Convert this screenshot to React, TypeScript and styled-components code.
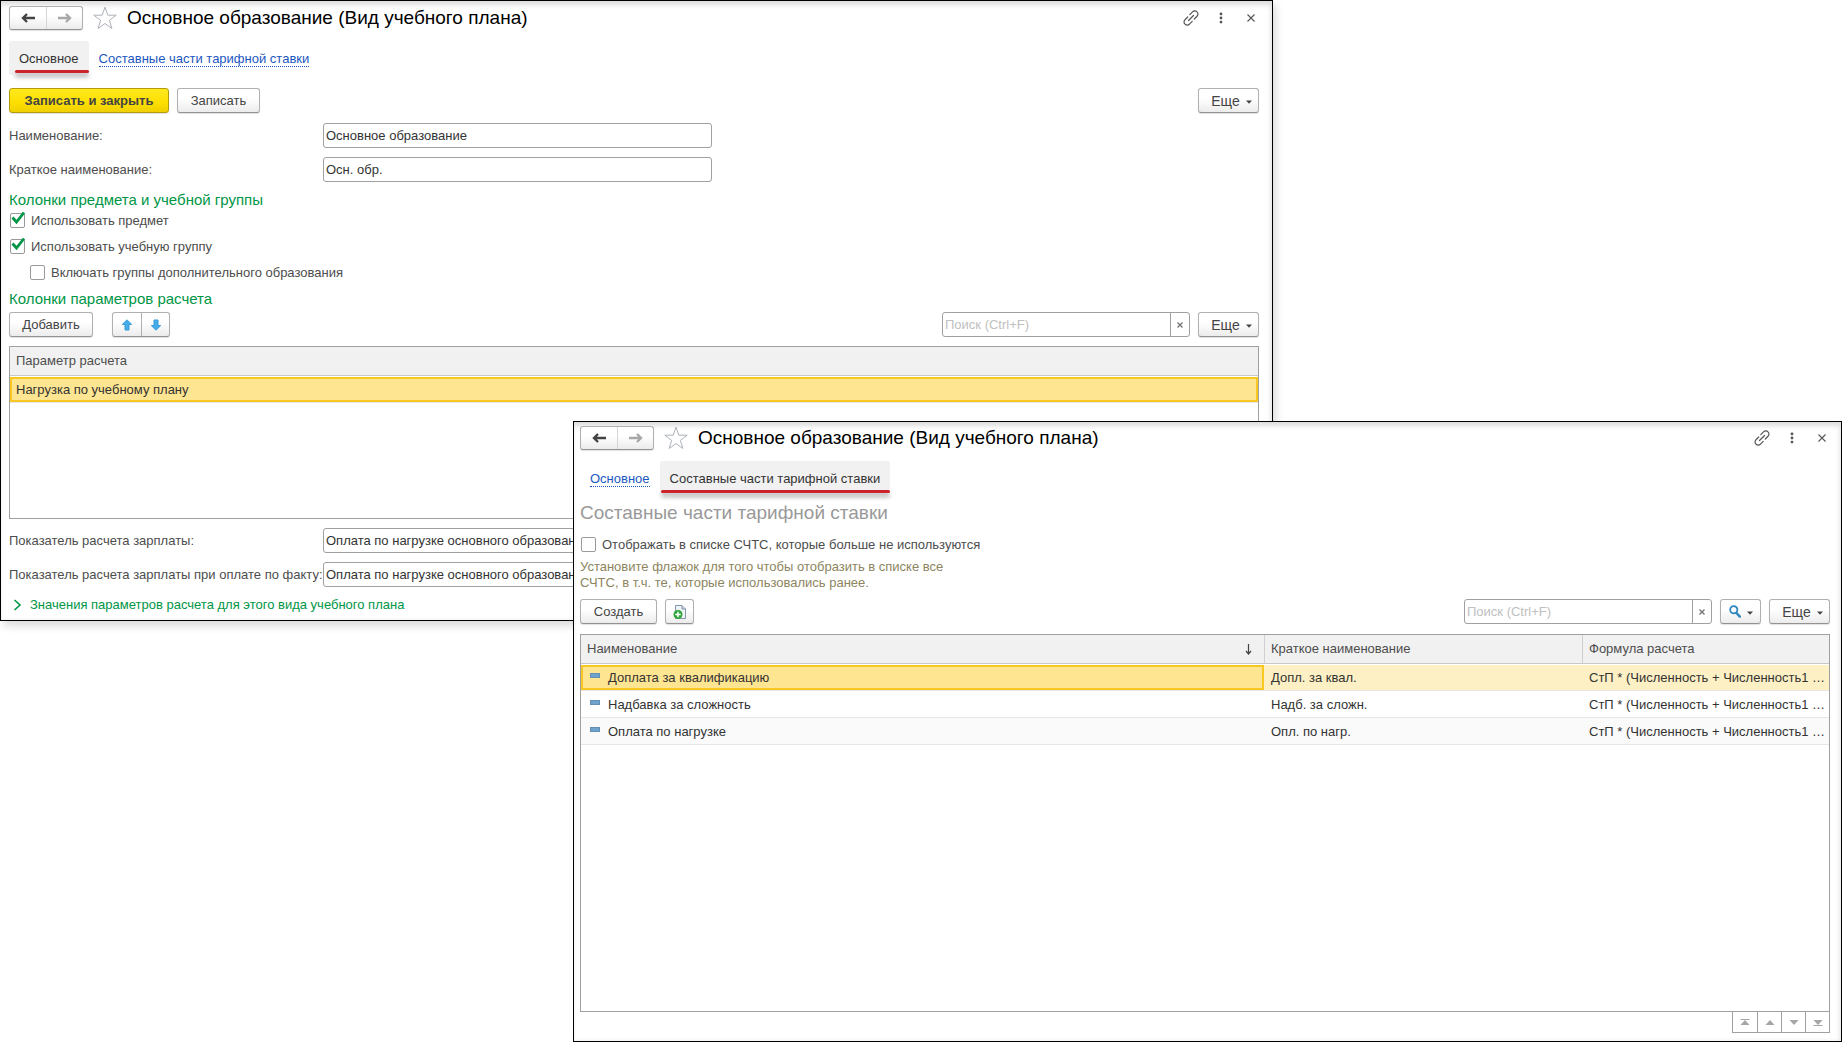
import React, { useId, useState } from 'react';
import styled, { createGlobalStyle, css } from 'styled-components';

const Global = createGlobalStyle`
  *, *::before, *::after { box-sizing: border-box; }
  body {
    margin: 0;
    background: #fff;
    color: #4d4d4d;
    font: 13px/16px "Liberation Sans", Arial, sans-serif;
  }
  button, input { font: inherit; color: inherit; margin: 0; }
  svg { display: block; flex: none; }
`;

const Desktop = styled.main`
  position: relative;
  min-height: 100vh;
`;

const windowFrame = css`
  display: flex;
  flex-direction: column;
  background: #fff;
  border: 1px solid #000;
`;

const PlanWindow = styled.section`
  ${windowFrame}
  width: 1273px;
  padding: 5px 13px 7px 8px;
  box-shadow: inset 0 6px 5px -2px #dedede, inset -2px 0 4px #ececec, 3px 5px 8px rgba(0, 0, 0, 0.14);
`;

const PartsWindow = styled.section`
  ${windowFrame}
  position: absolute;
  top: 421px;
  left: 573px;
  right: 0;
  bottom: 0;
  padding: 4px 11px 8px 6px;
  box-shadow: inset 0 6px 5px -2px #dedede, inset -2px 0 4px #ececec;
`;

const TitleBar = styled.header`
  display: flex;
  align-items: center;
  height: 24px;
`;

const Title = styled.h1`
  flex: 1;
  margin: 0 0 0 10px;
  font-size: 19px;
  line-height: 24px;
  font-weight: 400;
  color: #000;
`;

const WindowTools = styled.div`
  display: flex;
  gap: 14px;
`;

const IconButton = styled.button`
  display: flex;
  align-items: center;
  justify-content: center;
  width: 16px;
  height: 24px;
  padding: 0;
  border: 0;
  background: none;
`;

const StarButton = styled(IconButton)`
  width: 24px;
  margin-left: 10px;
`;

const ButtonGroup = styled.div`
  display: flex;
  border: 1px solid #b0b0b0;
  border-bottom-color: #929292;
  border-radius: 3px;
  background: linear-gradient(#fff 40%, #ececec);
  box-shadow: 0 1px 1px rgba(0, 0, 0, 0.12);
`;

const GroupButton = styled.button`
  display: flex;
  align-items: center;
  justify-content: center;
  width: 28px;
  height: 23px;
  padding: 0;
  border: 0;
  background: none;
  & + & { border-left: 1px solid #b0b0b0; }
`;

const HistoryButton = styled(GroupButton)`
  width: 36px;
  height: 22px;
  & + & { border-left: 1px solid #d6d6d6; }
`;

const Tabs = styled.nav`
  display: flex;
  margin-top: 11px;
`;

const Tab = styled.a<{ $active?: boolean; $markLeft?: number }>`
  position: relative;
  height: 34px;
  padding: 10px 10px 8px;
  color: #1c57c0;
  text-decoration: none;
  span { border-bottom: 1px dotted #1c57c0; }
  ${(p) =>
    p.$active &&
    css`
      color: #333;
      background: #f1f1f1;
      border-radius: 3px;
      span { border: 0; }
      &::after {
        content: '';
        position: absolute;
        left: ${p.$markLeft ?? 1}px;
        right: 0;
        bottom: 2px;
        height: 3px;
        border-radius: 2px;
        background: #cc2229;
        box-shadow: 0 4px 4px rgba(0, 0, 0, 0.35);
      }
    `}
`;

const Toolbar = styled.div<{ $top: number }>`
  display: flex;
  align-items: center;
  gap: 8px;
  margin-top: ${(p) => p.$top}px;
`;

const Spacer = styled.div`
  flex: 1;
`;

const Button = styled.button<{ $primary?: boolean; $width: number }>`
  display: flex;
  align-items: center;
  justify-content: center;
  gap: 6px;
  min-width: ${(p) => p.$width}px;
  height: 25px;
  padding: 0;
  white-space: nowrap;
  border: 1px solid #b0b0b0;
  border-bottom-color: #929292;
  border-radius: 3px;
  background: linear-gradient(#fff 40%, #ececec);
  box-shadow: 0 1px 1px rgba(0, 0, 0, 0.12);
  color: #444;
  ${(p) =>
    p.$primary &&
    css`
      font-weight: 700;
      border-color: #b39b0a;
      background: linear-gradient(#ffe81f, #fddf00 60%, #efcf00);
    `}
`;

const MoreLabel = styled.span`
  margin-left: 6px;
  font-size: 14px;
`;

const Form = styled.div<{ $top: number }>`
  display: grid;
  grid-template-columns: 314px minmax(0, 1fr);
  align-items: center;
  row-gap: 9px;
  margin-top: ${(p) => p.$top}px;
  label { white-space: nowrap; }
`;

const TextBox = styled.input<{ $short?: boolean }>`
  width: 100%;
  max-width: ${(p) => (p.$short ? '389px' : 'none')};
  height: 25px;
  padding: 0 2px;
  border: 1px solid #a0a0a0;
  border-radius: 3px;
  background: #fff;
  color: #333;
`;

const SectionTitle = styled.h2`
  margin: 9px 0 4px;
  font-size: 15px;
  line-height: 18px;
  font-weight: 400;
  color: #009646;
`;

const CheckList = styled.div`
  display: flex;
  flex-direction: column;
  gap: 10px;
`;

const CheckLabel = styled.label<{ $indent?: boolean; $top?: number }>`
  display: flex;
  align-items: center;
  gap: 6px;
  margin: ${(p) => p.$top ?? 0}px 0 0 ${(p) => (p.$indent ? 21 : 1)}px;
`;

const CheckFrame = styled.span`
  position: relative;
  height: 16px;
  svg {
    position: absolute;
    left: 1px;
    top: -2px;
    pointer-events: none;
  }
`;

const CheckInput = styled.input`
  display: block;
  appearance: none;
  width: 15px;
  height: 15px;
  border: 1px solid #9a9a9a;
  border-radius: 2px;
  background: #fff;
`;

const SearchBox = styled.div`
  display: flex;
  width: 248px;
  height: 25px;
  border: 1px solid #a0a0a0;
  border-radius: 3px;
  background: #fff;
  input {
    flex: 1;
    min-width: 0;
    padding: 0 2px;
    border: 0;
    background: none;
    outline: 0;
  }
  input::placeholder { color: #c0c0c0; opacity: 1; }
  button {
    display: flex;
    align-items: center;
    justify-content: center;
    width: 19px;
    padding: 0;
    border: 0;
    border-left: 1px solid #a0a0a0;
    background: none;
  }
`;

const TableFrame = styled.div<{ $top: number; $fill?: boolean }>`
  margin-top: ${(p) => p.$top}px;
  border: 1px solid #a0a0a0;
  ${(p) => (p.$fill ? 'flex: 1;' : 'height: 173px;')}
`;

const Table = styled.table`
  width: 100%;
  table-layout: fixed;
  border-collapse: separate;
  border-spacing: 0;
`;

const HeadCell = styled.th<{ $width?: number }>`
  width: ${(p) => (p.$width ? `${p.$width}px` : 'auto')};
  height: 29px;
  padding: 0 6px;
  text-align: left;
  font-weight: 400;
  background: #f1f1f1;
  border-bottom: 1px solid #c8c8c8;
  & + & { border-left: 1px solid #d0d0d0; }
`;

const HeadContent = styled.div`
  display: flex;
  align-items: center;
  justify-content: space-between;
  padding-right: 6px;
`;

const Row = styled.tr<{ $selected?: boolean }>`
  color: #333;
  background: #fff;
  &:nth-child(3) { background: #fafafa; }
  td { padding: 1px 0 0; border-bottom: 1px solid #e6e6e6; }
  td > div { background: ${(p) => (p.$selected ? '#fdf0c4' : 'transparent')}; }
`;

const Cell = styled.div`
  height: 25px;
  padding: 0 2px 0 7px;
  line-height: 25px;
  white-space: nowrap;
`;

const LeadCell = styled.div<{ $selected?: boolean; $icon?: boolean }>`
  display: flex;
  gap: 8px;
  height: 25px;
  padding: 0 ${(p) => (p.$icon ? 7 : 4)}px;
  line-height: 21px;
  border: 2px solid transparent;
  svg { margin-top: 6px; }
  && {
    background: ${(p) => (p.$selected ? '#fee591' : 'transparent')};
    border-color: ${(p) => (p.$selected ? '#f9c722' : 'transparent')};
  }
`;

const Expander = styled.button`
  display: flex;
  align-items: center;
  gap: 8px;
  align-self: flex-start;
  margin-top: 10px;
  padding: 0 0 0 4px;
  border: 0;
  background: none;
  line-height: 16px;
  color: #009646;
`;

const PageTitle = styled.h2`
  margin: 7px 0 0;
  font-size: 19px;
  line-height: 22px;
  font-weight: 400;
  color: #999;
`;

const Hint = styled.p`
  max-width: 380px;
  margin: 6px 0 0;
  color: #8c8560;
`;

const Pager = styled.div`
  display: flex;
  align-self: flex-end;
  border: 1px solid #a0a0a0;
  border-top: 0;
  button {
    display: flex;
    align-items: center;
    justify-content: center;
    width: 24px;
    height: 20px;
    padding: 0;
    border: 0;
    background: none;
  }
  button + button { border-left: 1px solid #a0a0a0; }
`;

const ArrowIcon = ({ dim }: { dim?: boolean }) => (
  <svg width="14" height="12" viewBox="0 0 14 12" fill="none" stroke={dim ? '#a8a8a8' : '#444'} strokeWidth="2.4">
    <path d={dim ? 'M0 6h12M8 2l4 4-4 4' : 'M14 6H2M6 2L2 6l4 4'} />
  </svg>
);

const StarIcon = () => (
  <svg width="24" height="24" viewBox="0 0 24 24" fill="#fff" stroke="#adb2b8" strokeWidth="1">
    <path d="M12 1.2l2.8 8h8.4l-6.8 5.1 2.5 8.2L12 17.5l-6.9 5 2.5-8.2L.8 9.2h8.4z" />
  </svg>
);

const LinkIcon = () => (
  <svg width="16" height="16" viewBox="0 0 16 16" fill="none" stroke="#555" strokeWidth="1.2" strokeLinecap="round">
    <path d="M6.8 4.6l2.7-2.7a3 3 0 0 1 4.5 0 3 3 0 0 1 0 4.4l-2.7 2.7M9.2 11.4l-2.7 2.7a3 3 0 0 1-4.5 0 3 3 0 0 1 0-4.4l2.7-2.7M5.5 10.5l5-5" />
  </svg>
);

const DotsIcon = () => (
  <svg width="4" height="12" viewBox="0 0 4 12" fill="#555">
    <circle cx="2" cy="1.9" r="1.4" />
    <circle cx="2" cy="6" r="1.4" />
    <circle cx="2" cy="10.1" r="1.4" />
  </svg>
);

const CrossIcon = () => (
  <svg width="8" height="8" viewBox="0 0 8 8" stroke="#555" strokeWidth="1.1">
    <path d="M.5.5l7 7M7.5.5l-7 7" />
  </svg>
);

const ClearIcon = () => (
  <svg width="6" height="6" viewBox="0 0 6 6" stroke="#777" strokeWidth="1.4">
    <path d="M.5.5l5 5M5.5.5l-5 5" />
  </svg>
);

const CaretIcon = () => (
  <svg width="6" height="6" viewBox="0 0 6 6" fill="#444">
    <path d="M0 2.5h6L3 5.7z" />
  </svg>
);

const CheckIcon = () => (
  <svg width="15" height="14" viewBox="0 0 15 14" fill="none" stroke="#009646" strokeWidth="2.8">
    <path d="M1.5 6.5l4 4.5L13 1.5" />
  </svg>
);

const MoveIcon = ({ down }: { down?: boolean }) => (
  <svg width="12" height="12" viewBox="0 0 12 12" fill="#45aeea" stroke="#3a9ad4" strokeWidth="1">
    <path d={down ? 'M6 11.2L1.3 6.6h2.7V1h4v5.6h2.7z' : 'M6 .8L1.3 5.4h2.7V11h4V5.4h2.7z'} />
  </svg>
);

const ChevronIcon = () => (
  <svg width="9" height="12" viewBox="0 0 9 12" fill="none" stroke="#009646" strokeWidth="1.6">
    <path d="M1.5 1l5.5 5-5.5 5" />
  </svg>
);

const NewDocIcon = () => (
  <svg width="14" height="16" viewBox="0 0 14 16">
    <path d="M2.5 1.5h6.5l3.5 3.5v9.5h-10z" fill="#eef3f7" stroke="#8497a8" />
    <path d="M9 1.5v3.5h3.5" fill="#c8d5e0" stroke="#8497a8" />
    <circle cx="5" cy="10.5" r="4.5" fill="#2fa53a" />
    <path d="M5 7.8v5.4M2.3 10.5h5.4" stroke="#fff" strokeWidth="1.5" />
  </svg>
);

const MagnifierIcon = () => (
  <svg width="12" height="13" viewBox="0 0 12 13" fill="none" stroke="#2f86bf">
    <circle cx="4.8" cy="4.8" r="3.6" strokeWidth="1.8" />
    <path d="M7.5 8l3.3 3.6" strokeWidth="2.4" strokeLinecap="round" />
  </svg>
);

const SortIcon = () => (
  <svg width="7" height="11" viewBox="0 0 7 11" fill="none" stroke="#444" strokeWidth="1.2">
    <path d="M3.5 0v9.5M1 7l2.5 3L6 7" />
  </svg>
);

const ItemIcon = () => (
  <svg width="10" height="5" viewBox="0 0 10 5">
    <rect x=".5" y=".5" width="9" height="4" fill="#6fa3cc" stroke="#6490b3" />
  </svg>
);

const PagerIcon = ({ down, edge }: { down?: boolean; edge?: boolean }) => (
  <svg width="10" height="7" viewBox="0 0 10 7" fill="#a6a6a6">
    <path d={down ? 'M.5 1h9L5 6z' : 'M.5 6h9L5 1z'} />
    {edge && <rect x=".5" y={down ? 6 : 0} width="9" height="1" />}
  </svg>
);

const WindowHeader = () => (
  <TitleBar>
    <ButtonGroup>
      <HistoryButton aria-label="Назад"><ArrowIcon /></HistoryButton>
      <HistoryButton aria-label="Вперед"><ArrowIcon dim /></HistoryButton>
    </ButtonGroup>
    <StarButton aria-label="Избранное"><StarIcon /></StarButton>
    <Title>Основное образование (Вид учебного плана)</Title>
    <WindowTools>
      <IconButton aria-label="Ссылка"><LinkIcon /></IconButton>
      <IconButton aria-label="Меню"><DotsIcon /></IconButton>
      <IconButton aria-label="Закрыть"><CrossIcon /></IconButton>
    </WindowTools>
  </TitleBar>
);

const Check = ({ label, initial = false, indent, top }: { label: string; initial?: boolean; indent?: boolean; top?: number }) => {
  const [checked, setChecked] = useState(initial);
  return (
    <CheckLabel $indent={indent} $top={top}>
      <CheckFrame>
        <CheckInput type="checkbox" checked={checked} onChange={(e) => setChecked(e.target.checked)} />
        {checked && <CheckIcon />}
      </CheckFrame>
      {label}
    </CheckLabel>
  );
};

const Field = ({ label, value, short }: { label: string; value: string; short?: boolean }) => {
  const id = useId();
  return (
    <>
      <label htmlFor={id}>{label}</label>
      <TextBox id={id} type="text" defaultValue={value} $short={short} />
    </>
  );
};

const Search = () => {
  const [query, setQuery] = useState('');
  return (
    <SearchBox>
      <input
        type="text"
        aria-label="Поиск"
        placeholder="Поиск (Ctrl+F)"
        value={query}
        onChange={(e) => setQuery(e.target.value)}
      />
      <button aria-label="Очистить" onClick={() => setQuery('')}><ClearIcon /></button>
    </SearchBox>
  );
};

const More = () => (
  <Button $width={61}>
    <MoreLabel>Еще</MoreLabel>
    <CaretIcon />
  </Button>
);

const formula = 'СтП * (Численность + Численность1 …';
const parts = [
  { name: 'Доплата за квалификацию', short: 'Допл. за квал.' },
  { name: 'Надбавка за сложность', short: 'Надб. за сложн.' },
  { name: 'Оплата по нагрузке', short: 'Опл. по нагр.' },
];

const MoveGroup = styled(ButtonGroup)`
  margin-left: 11px;
`;

export default function App() {
  return (
    <Desktop>
      <Global />
      <PlanWindow>
        <WindowHeader />
        <Tabs>
          <Tab href="#main" $active $markLeft={6}><span>Основное</span></Tab>
          <Tab href="#parts"><span>Составные части тарифной ставки</span></Tab>
        </Tabs>
        <Toolbar $top={13}>
          <Button $primary $width={160}>Записать и закрыть</Button>
          <Button $width={83}>Записать</Button>
          <Spacer />
          <More />
        </Toolbar>
        <Form $top={10}>
          <Field label="Наименование:" value="Основное образование" short />
          <Field label="Краткое наименование:" value="Осн. обр." short />
        </Form>
        <SectionTitle>Колонки предмета и учебной группы</SectionTitle>
        <CheckList>
          <Check label="Использовать предмет" initial />
          <Check label="Использовать учебную группу" initial />
          <Check label="Включать группы дополнительного образования" indent />
        </CheckList>
        <SectionTitle>Колонки параметров расчета</SectionTitle>
        <Toolbar $top={0}>
          <Button $width={84}>Добавить</Button>
          <MoveGroup>
            <GroupButton aria-label="Вверх"><MoveIcon /></GroupButton>
            <GroupButton aria-label="Вниз"><MoveIcon down /></GroupButton>
          </MoveGroup>
          <Spacer />
          <Search />
          <More />
        </Toolbar>
        <TableFrame $top={9}>
          <Table>
            <thead>
              <tr><HeadCell>Параметр расчета</HeadCell></tr>
            </thead>
            <tbody>
              <Row $selected>
                <td><LeadCell $selected>Нагрузка по учебному плану</LeadCell></td>
              </Row>
            </tbody>
          </Table>
        </TableFrame>
        <Form $top={9}>
          <Field label="Показатель расчета зарплаты:" value="Оплата по нагрузке основного образования" />
          <Field label="Показатель расчета зарплаты при оплате по факту:" value="Оплата по нагрузке основного образования" />
        </Form>
        <Expander>
          <ChevronIcon />
          Значения параметров расчета для этого вида учебного плана
        </Expander>
      </PlanWindow>

      <PartsWindow>
        <WindowHeader />
        <Tabs>
          <Tab href="#main"><span>Основное</span></Tab>
          <Tab href="#parts" $active><span>Составные части тарифной ставки</span></Tab>
        </Tabs>
        <PageTitle>Составные части тарифной ставки</PageTitle>
        <Check label="Отображать в списке СЧТС, которые больше не используются" top={13} />
        <Hint>Установите флажок для того чтобы отобразить в списке все СЧТС, в т.ч. те, которые использовались ранее.</Hint>
        <Toolbar $top={8}>
          <Button $width={77}>Создать</Button>
          <Button $width={29} aria-label="Создать группу"><NewDocIcon /></Button>
          <Spacer />
          <Search />
          <Button $width={41} aria-label="Найти"><MagnifierIcon /><CaretIcon /></Button>
          <More />
        </Toolbar>
        <TableFrame $top={10} $fill>
          <Table>
            <thead>
              <tr>
                <HeadCell>
                  <HeadContent>Наименование<SortIcon /></HeadContent>
                </HeadCell>
                <HeadCell $width={318}>Краткое наименование</HeadCell>
                <HeadCell $width={247}>Формула расчета</HeadCell>
              </tr>
            </thead>
            <tbody>
              {parts.map((part, i) => (
                <Row key={part.name} $selected={i === 0}>
                  <td><LeadCell $icon $selected={i === 0}><ItemIcon />{part.name}</LeadCell></td>
                  <td><Cell>{part.short}</Cell></td>
                  <td><Cell>{formula}</Cell></td>
                </Row>
              ))}
            </tbody>
          </Table>
        </TableFrame>
        <Pager>
          <button aria-label="В начало"><PagerIcon edge /></button>
          <button aria-label="Назад"><PagerIcon /></button>
          <button aria-label="Далее"><PagerIcon down /></button>
          <button aria-label="В конец"><PagerIcon down edge /></button>
        </Pager>
      </PartsWindow>
    </Desktop>
  );
}
